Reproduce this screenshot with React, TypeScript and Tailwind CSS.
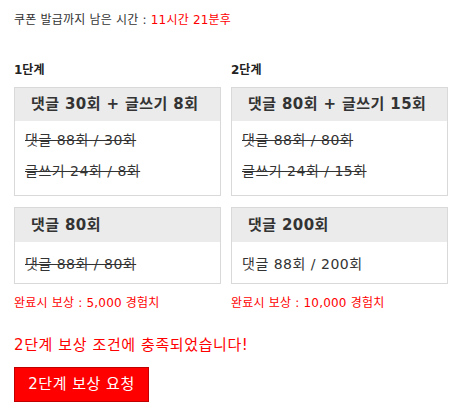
export default function App() {
  const font = { fontFamily: '"DejaVu Sans", "Noto Sans CJK KR", sans-serif' };
  return (
    <div className="w-[457px] h-[414px] bg-white pl-[14px] pr-[9px] pt-[11px] text-[#333]" style={font}>
      <p className="text-[12px] leading-[18px] tracking-[0.2px]">
        쿠폰 발급까지 남은 시간 : <span className="text-[#ff0000]">11시간 21분후</span>
      </p>

      <div className="mt-[32px] grid grid-cols-2">
        {/* 1단계 */}
        <div className="pr-[10px]">
          <h3 className="text-[12px] font-bold leading-[18px] text-[#222]">1단계</h3>
          <div className="mt-[8px] border border-[#d9d9d9]">
            <div className="h-[33px] bg-[#ebebeb] pl-[16px] flex items-center whitespace-nowrap text-[15px] font-bold tracking-[0.4px]">
              댓글 30회 + 글쓰기 8회
            </div>
            <div className="px-[10px] pt-[4px] pb-[8px] text-[14px] leading-[31px] tracking-[0.5px]">
              <p className="line-through">댓글 88회 / 30회</p>
              <p className="line-through">글쓰기 24회 / 8회</p>
            </div>
          </div>
          <div className="mt-[11px] border border-[#d9d9d9]">
            <div className="h-[34px] bg-[#ebebeb] pl-[16px] flex items-center whitespace-nowrap text-[15px] font-bold tracking-[0.4px]">
              댓글 80회
            </div>
            <div className="px-[10px] pt-[10px] pb-[7px] text-[14px] leading-[24px] tracking-[0.5px]">
              <p className="line-through">댓글 88회 / 80회</p>
            </div>
          </div>
          <p className="mt-[10px] text-[12px] leading-[18px] tracking-[0.2px] text-[#ff0000]">완료시 보상 : 5,000 경험치</p>
        </div>

        {/* 2단계 */}
        <div>
          <h3 className="text-[12px] font-bold leading-[18px] text-[#222]">2단계</h3>
          <div className="mt-[8px] border border-[#d9d9d9]">
            <div className="h-[33px] bg-[#ebebeb] pl-[16px] flex items-center whitespace-nowrap text-[15px] font-bold tracking-[0.4px]">
              댓글 80회 + 글쓰기 15회
            </div>
            <div className="px-[10px] pt-[4px] pb-[8px] text-[14px] leading-[31px] tracking-[0.5px]">
              <p className="line-through">댓글 88회 / 80회</p>
              <p className="line-through">글쓰기 24회 / 15회</p>
            </div>
          </div>
          <div className="mt-[11px] border border-[#d9d9d9]">
            <div className="h-[34px] bg-[#ebebeb] pl-[16px] flex items-center whitespace-nowrap text-[15px] font-bold tracking-[0.4px]">
              댓글 200회
            </div>
            <div className="px-[10px] pt-[10px] pb-[7px] text-[14px] leading-[24px] tracking-[0.5px]">
              <p>댓글 88회 / 200회</p>
            </div>
          </div>
          <p className="mt-[10px] text-[12px] leading-[18px] tracking-[0.2px] text-[#ff0000]">완료시 보상 : 10,000 경험치</p>
        </div>
      </div>

      <p className="mt-[23px] text-[15px] leading-[20px] tracking-[0.6px] text-[#ff0000]">2단계 보상 조건에 충족되었습니다!</p>
      <button className="mt-[12px] w-[135px] h-[35px] bg-[#ff0000] border border-[#c00000] text-white text-[15px] tracking-[0.5px]">
        2단계 보상 요청
      </button>
    </div>
  );
}
